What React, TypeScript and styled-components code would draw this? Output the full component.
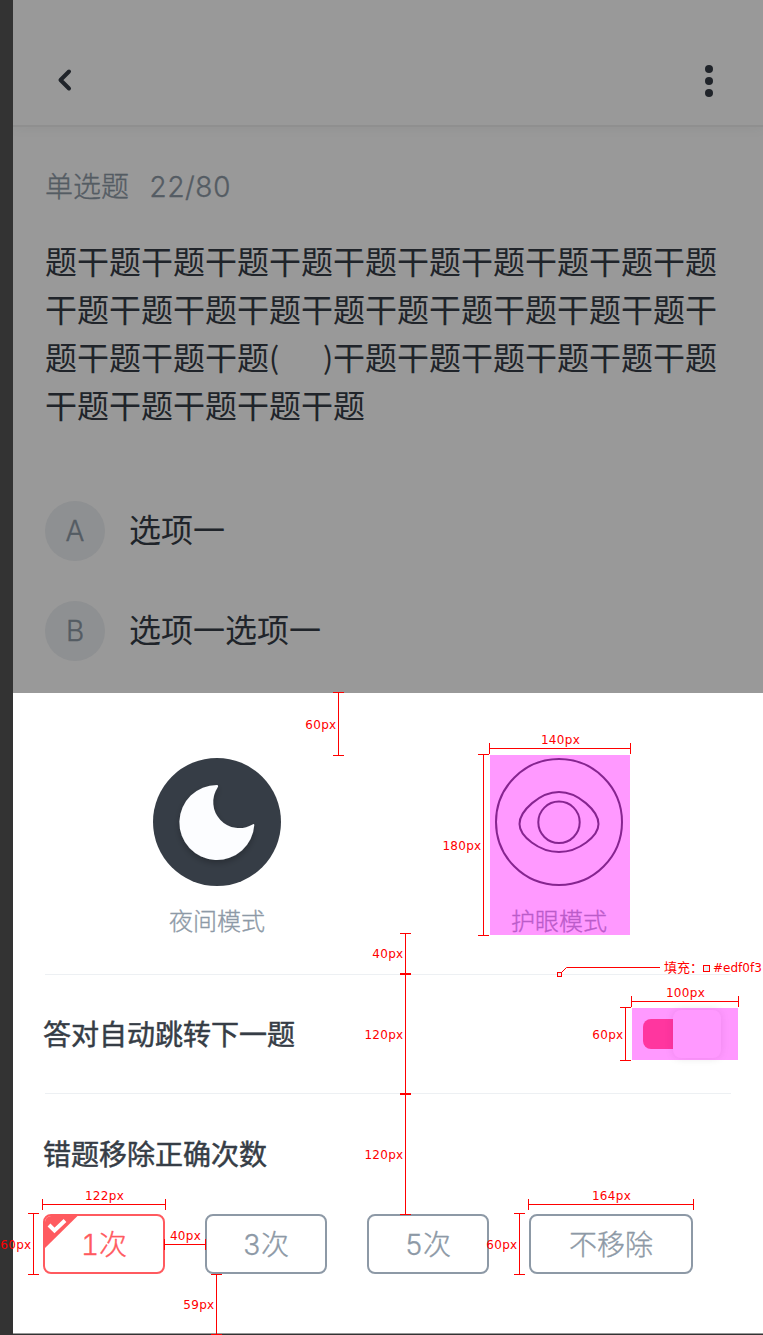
import React from 'react';
import styled, { createGlobalStyle, css } from 'styled-components';

const ink = '#363d46';
const muted = '#8d99a6';
const accent = '#ff5a5f';
const hairline = '#edf0f3';
const spec = '#ff0000';

const GlobalStyle = createGlobalStyle`
  * { box-sizing: border-box; }
  html, body { margin: 0; padding: 0; background: #333333; }
  body {
    font-family: Inter, "Noto Sans CJK SC", sans-serif;
    font-variant-numeric: tabular-nums;
    overflow: hidden;
  }
`;

const Board = styled.div`
  position: relative;
  width: 763px;
  height: 1335px;
  padding-left: 13px;
  overflow: hidden;
  background: #333333;
`;

const Phone = styled.div`
  display: flex;
  flex-direction: column;
  height: 1334px;
  background: #ffffff;
  border-bottom: 1px solid #999999;
`;

const Quiz = styled.section`
  position: relative;
  height: 693px;
  background: #ffffff;
  overflow: hidden;
  &::after {
    content: '';
    position: absolute;
    inset: 0;
    background: rgba(0, 0, 0, 0.4);
  }
`;

const NavBar = styled.header`
  display: flex;
  justify-content: space-between;
  height: 125px;
  padding: 61px 43px 0 40px;
  box-shadow: 0 2px 0 #eeefef, 0 3px 12px rgba(54, 70, 66, 0.06);
`;

const QuizBody = styled.div`
  padding: 41px 32px 0;
`;

const lightText = css`
  font-weight: 300;
  color: ${muted};
  -webkit-text-stroke: 0.35px currentColor;
`;

const Progress = styled.div`
  ${lightText}
  display: flex;
  gap: 20px;
  height: 42px;
  line-height: 42px;
  font-size: 28px;
`;

const Count = styled.span`
  letter-spacing: -0.1px;
`;

const Stem = styled.div`
  margin-top: 31px;
  font-size: 32px;
  line-height: 48px;
  color: ${ink};
  white-space: nowrap;
`;

const StemLine = styled.div`
  display: flex;
  height: 48px;
`;

const Blank = styled.span`
  display: flex;
  justify-content: space-between;
  width: 64px;
  font-family: "Noto Sans CJK SC", sans-serif;
  font-size: 30px;
  line-height: 42px;
`;

const Options = styled.div`
  display: flex;
  flex-direction: column;
  gap: 40px;
  margin-top: 70px;
`;

const Option = styled.div`
  display: flex;
  align-items: center;
  gap: 24px;
  height: 60px;
  font-size: 32px;
  color: ${ink};
`;

const OptionText = styled.span`
  line-height: 48px;
`;

const Letter = styled.span`
  ${lightText}
  display: flex;
  align-items: center;
  justify-content: center;
  width: 60px;
  height: 60px;
  border-radius: 50%;
  background: ${hairline};
  font-size: 28px;
`;

const Sheet = styled.section`
  display: flex;
  flex-direction: column;
  padding: 62px 32px 0;
`;

const Modes = styled.div`
  display: flex;
  gap: 202px;
  height: 219px;
  padding-left: 102px;
`;

const Mode = styled.div`
  display: flex;
  flex-direction: column;
  align-items: center;
  width: 140px;
  height: 180px;
  padding-top: 3px;
`;

const ModeIcon = styled.svg`
  display: block;
  flex: none;
  width: 128px;
  height: 128px;
`;

const ModeLabel = styled.span`
  ${lightText}
  flex: none;
  margin-top: 18px;
  font-size: 24px;
  line-height: 36px;
`;

const Row = styled.div<{ $height: number }>`
  display: flex;
  align-items: center;
  justify-content: space-between;
  height: ${(p) => p.$height}px;
  border-top: 1px solid ${hairline};
`;

const RowTitle = styled.h2`
  margin: 2px 0 0 -2px;
  font-size: 28px;
  line-height: 42px;
  font-weight: 400;
  color: ${ink};
  -webkit-text-stroke: 0.5px ${ink};
`;

const Switch = styled.div`
  display: flex;
  align-items: center;
  width: 78px;
  height: 30px;
  margin-right: 10px;
  border-radius: 8px;
  background: linear-gradient(to right, ${accent} 45px, transparent 45px);
`;

const Knob = styled.span`
  width: 48px;
  height: 48px;
  margin-left: 30px;
  border-radius: 8px;
  background: #ffffff;
  box-shadow: 0 0 8px rgba(0, 0, 0, 0.12);
`;

const Choices = styled.div`
  display: flex;
  gap: 40px;
  margin-left: -2px;
`;

const Choice = styled.div<{ $width: number; $active?: boolean }>`
  ${lightText}
  position: relative;
  display: flex;
  align-items: center;
  justify-content: center;
  width: ${(p) => p.$width}px;
  height: 60px;
  padding-top: 2px;
  border: 2px solid ${(p) => (p.$active ? accent : muted)};
  border-radius: 8px;
  font-size: 28px;
  line-height: 42px;
  color: ${(p) => (p.$active ? accent : muted)};
  overflow: hidden;
`;

const Corner = styled.svg`
  position: absolute;
  left: 0;
  top: 0;
`;

const Tint = styled.div<{ $x: number; $y: number; $w: number; $h: number }>`
  position: absolute;
  left: ${(p) => p.$x}px;
  top: ${(p) => p.$y}px;
  width: ${(p) => p.$w}px;
  height: ${(p) => p.$h}px;
  background: rgba(255, 0, 255, 0.4);
`;

const specText = css`
  font-family: "DejaVu Sans", "Noto Sans CJK SC", sans-serif;
  font-size: 12px;
  line-height: 14px;
  color: ${spec};
  white-space: nowrap;
`;

const VRule = styled.div<{ $x: number; $from: number; $to: number }>`
  position: absolute;
  left: ${(p) => p.$x - 5}px;
  top: ${(p) => p.$from}px;
  width: 11px;
  height: ${(p) => p.$to - p.$from + 1}px;
  border: solid ${spec};
  border-width: 1px 0;
  background: linear-gradient(${spec}, ${spec}) 5px 0 / 1px 100% no-repeat;
`;

const VLabel = styled.span`
  ${specText}
  position: absolute;
  right: 7.5px;
  top: calc(50% - 6.4px);
  letter-spacing: 0.3px;
`;

const HRule = styled.div<{ $y: number; $from: number; $to: number }>`
  position: absolute;
  left: ${(p) => p.$from}px;
  top: ${(p) => p.$y - 5}px;
  width: ${(p) => p.$to - p.$from + 1}px;
  height: 11px;
  border: solid ${spec};
  border-width: 0 1px;
  background: linear-gradient(${spec}, ${spec}) 0 5px / 100% 1px no-repeat;
`;

const HLabel = styled.span`
  ${specText}
  position: absolute;
  left: calc(50% + 0.5px);
  top: -10px;
  transform: translateX(-50%);
  letter-spacing: 0.3px;
`;

const Leader = styled.svg`
  position: absolute;
  left: 556px;
  top: 964px;
`;

const FillNote = styled.div`
  ${specText}
  position: absolute;
  left: 664px;
  top: 961px;
  display: flex;
  align-items: center;
`;

const NoteName = styled.span`
  width: 39px;
  font-size: 13px;
`;

const Swatch = styled.span`
  width: 7px;
  height: 7px;
  margin-right: 3px;
  border: 1px solid ${spec};
  background: ${hairline};
`;

const verticals = [
  { x: 338, from: 692, to: 755, text: '60px' },
  { x: 483, from: 754, to: 935, text: '180px' },
  { x: 405, from: 933, to: 973, text: '40px' },
  { x: 405, from: 974, to: 1093, text: '120px' },
  { x: 405, from: 1094, to: 1214, text: '120px' },
  { x: 625, from: 1007, to: 1060, text: '60px' },
  { x: 33, from: 1213, to: 1274, text: '60px' },
  { x: 519, from: 1213, to: 1274, text: '60px' },
  { x: 216, from: 1274, to: 1334, text: '59px' },
];

const horizontals = [
  { y: 748, from: 489, to: 630, text: '140px' },
  { y: 1001, from: 631, to: 738, text: '100px' },
  { y: 1204, from: 42, to: 165, text: '122px' },
  { y: 1204, from: 528, to: 693, text: '164px' },
  { y: 1244, from: 164, to: 205, text: '40px' },
];

export default function App() {
  return (
    <>
      <GlobalStyle />
      <Board>
        <Phone>
          <Quiz>
            <NavBar>
              <svg width="24" height="40" viewBox="0 0 24 40" fill="none" stroke={ink} strokeWidth="4" strokeLinecap="round" strokeLinejoin="round">
                <path d="M16 10.5 L7.5 19 L16 27.5" />
              </svg>
              <svg width="22" height="40" viewBox="0 0 22 40" fill={ink}>
                <circle cx="11" cy="8" r="4" />
                <circle cx="11" cy="20" r="4" />
                <circle cx="11" cy="32" r="4" />
              </svg>
            </NavBar>
            <QuizBody>
              <Progress>
                <span>单选题</span>
                <Count>22/80</Count>
              </Progress>
              <Stem>
                <StemLine>题干题干题干题干题干题干题干题干题干题干题</StemLine>
                <StemLine>干题干题干题干题干题干题干题干题干题干题干</StemLine>
                <StemLine>
                  <span>题干题干题干题</span>
                  <Blank>
                    <span>(</span>
                    <span>)</span>
                  </Blank>
                  <span>干题干题干题干题干题干题</span>
                </StemLine>
                <StemLine>干题干题干题干题干题</StemLine>
              </Stem>
              <Options>
                <Option>
                  <Letter>A</Letter>
                  <OptionText>选项一</OptionText>
                </Option>
                <Option>
                  <Letter>B</Letter>
                  <OptionText>选项一选项一</OptionText>
                </Option>
              </Options>
            </QuizBody>
          </Quiz>
          <Sheet>
            <Modes>
              <Mode>
                <ModeIcon viewBox="0 0 128 128">
                  <defs>
                    <filter id="moonShadow" x="-20%" y="-20%" width="140%" height="150%">
                      <feDropShadow dx="0" dy="3" stdDeviation="3" floodColor="#000000" floodOpacity="0.25" />
                    </filter>
                  </defs>
                  <circle cx="64" cy="64" r="64" fill={ink} />
                  <path
                    d="M64 27 A37.5 37.5 0 1 0 101.3 67 Q101.2 65.2 99.5 66.4 A26 26 0 0 1 64.6 29.6 Q65.9 27.1 64 27 Z"
                    fill="#fcfdff"
                    filter="url(#moonShadow)"
                  />
                </ModeIcon>
                <ModeLabel>夜间模式</ModeLabel>
              </Mode>
              <Mode>
                <ModeIcon viewBox="0 0 128 128" fill="none" stroke={ink} strokeWidth="2">
                  <circle cx="64" cy="64" r="63" />
                  <path d="M64 34 C83 34 103.5 53 103.5 66 C103.5 78 84 94 64 94 C44 94 24.5 78 24.5 66 C24.5 53 45 34 64 34 Z" />
                  <circle cx="64" cy="64.3" r="20.7" />
                </ModeIcon>
                <ModeLabel>护眼模式</ModeLabel>
              </Mode>
            </Modes>
            <Row $height={119}>
              <RowTitle>答对自动跳转下一题</RowTitle>
              <Switch>
                <Knob />
              </Switch>
            </Row>
            <Row $height={121}>
              <RowTitle>错题移除正确次数</RowTitle>
            </Row>
            <Choices>
              <Choice $width={122} $active>
                <Corner width="34" height="34" viewBox="0 0 34 34">
                  <path d="M0 0 H32.5 L0 32 Z" fill={accent} />
                  <path d="M4 9 L9.5 14.5 L20 4.5" fill="none" stroke="#ffffff" strokeWidth="4" />
                </Corner>
                1次
              </Choice>
              <Choice $width={122}>3次</Choice>
              <Choice $width={122}>5次</Choice>
              <Choice $width={164}>不移除</Choice>
            </Choices>
          </Sheet>
        </Phone>

        <Tint $x={490} $y={755} $w={140} $h={180} />
        <Tint $x={632} $y={1008} $w={106} $h={52} />
        {verticals.map((m) => (
          <VRule key={`${m.x}-${m.from}`} $x={m.x} $from={m.from} $to={m.to}>
            <VLabel>{m.text}</VLabel>
          </VRule>
        ))}
        {horizontals.map((m) => (
          <HRule key={`${m.y}-${m.from}`} $y={m.y} $from={m.from} $to={m.to}>
            <HLabel>{m.text}</HLabel>
          </HRule>
        ))}
        <Leader width="106" height="14" viewBox="0 0 106 14" fill="none" stroke={spec}>
          <rect x="1.5" y="8.5" width="4" height="4" fill={hairline} />
          <path d="M5.5 8.5 L10.5 3.5 H104" />
        </Leader>
        <FillNote>
          <NoteName>填充：</NoteName>
          <Swatch />
          <span>#edf0f3</span>
        </FillNote>
      </Board>
    </>
  );
}
